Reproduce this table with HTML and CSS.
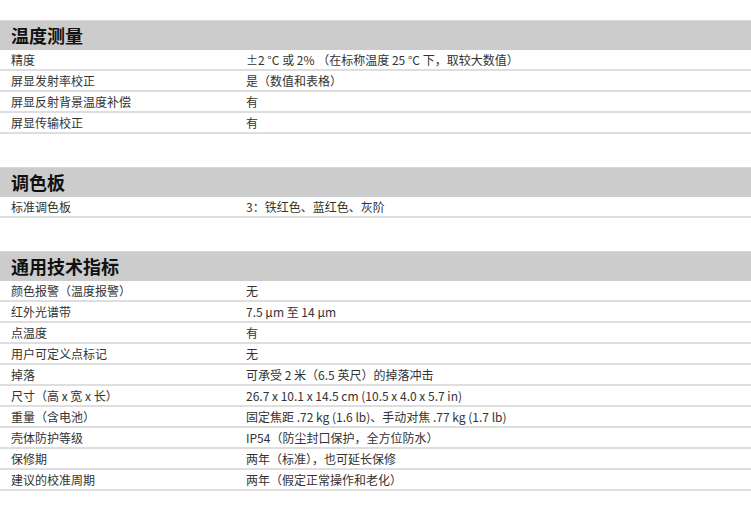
FILE: index.html
```html
<!DOCTYPE html>
<html>
<head>
  <title>技术指标</title>
  <link rel="stylesheet" href="styles.css">
</head>
<body>
  <div class="specs">
    <div class="section">
      <div class="section-title">温度测量</div>
      <div class="row"><div class="label">精度</div><div class="value">±2 °C 或 2% （在标称温度 25 °C 下，取较大数值）</div></div>
      <div class="row"><div class="label">屏显发射率校正</div><div class="value">是（数值和表格）</div></div>
      <div class="row"><div class="label">屏显反射背景温度补偿</div><div class="value">有</div></div>
      <div class="row"><div class="label">屏显传输校正</div><div class="value">有</div></div>
    </div>

    <div class="section">
      <div class="section-title">调色板</div>
      <div class="row"><div class="label">标准调色板</div><div class="value">3：铁红色、蓝红色、灰阶</div></div>
    </div>

    <div class="section">
      <div class="section-title">通用技术指标</div>
      <div class="row"><div class="label">颜色报警（温度报警）</div><div class="value">无</div></div>
      <div class="row"><div class="label">红外光谱带</div><div class="value">7.5 μm 至 14 μm</div></div>
      <div class="row"><div class="label">点温度</div><div class="value">有</div></div>
      <div class="row"><div class="label">用户可定义点标记</div><div class="value">无</div></div>
      <div class="row"><div class="label">掉落</div><div class="value">可承受 2 米（6.5 英尺）的掉落冲击</div></div>
      <div class="row"><div class="label">尺寸（高 x 宽 x 长）</div><div class="value">26.7 x 10.1 x 14.5 cm (10.5 x 4.0 x 5.7 in)</div></div>
      <div class="row"><div class="label">重量（含电池）</div><div class="value">固定焦距 .72 kg (1.6 lb)、手动对焦 .77 kg (1.7 lb)</div></div>
      <div class="row"><div class="label">壳体防护等级</div><div class="value">IP54（防尘封口保护，全方位防水）</div></div>
      <div class="row"><div class="label">保修期</div><div class="value">两年（标准），也可延长保修</div></div>
      <div class="row"><div class="label">建议的校准周期</div><div class="value">两年（假定正常操作和老化）</div></div>
    </div>
  </div>
</body>
</html>
```

FILE: styles.css
```css
:root {
  --header-bg: #cccccc;
  --line: #dedede;
  --text: #333333;
}

* {
  margin: 0;
  padding: 0;
  box-sizing: border-box;
}

body {
  background: #ffffff;
  color: var(--text);
  font-family: "Noto Sans CJK SC", "Noto Sans", sans-serif;
  padding-top: 20px;
}

.specs {
  display: flex;
  flex-direction: column;
  gap: 33px;
}

.section-title {
  height: 30px;
  line-height: 28px;
  padding-left: 11px;
  background: var(--header-bg);
  border-top: 1px solid #d9d9d9;
  font-size: 18px;
  font-weight: 700;
  color: #111111;
}

.row {
  display: grid;
  grid-template-columns: 235px 1fr;
  height: 21px;
  padding-left: 11px;
  border-bottom: 2px solid var(--line);
  font-size: 12px;
  line-height: 20px;
}

.label,
.value {
  white-space: nowrap;
}
```
